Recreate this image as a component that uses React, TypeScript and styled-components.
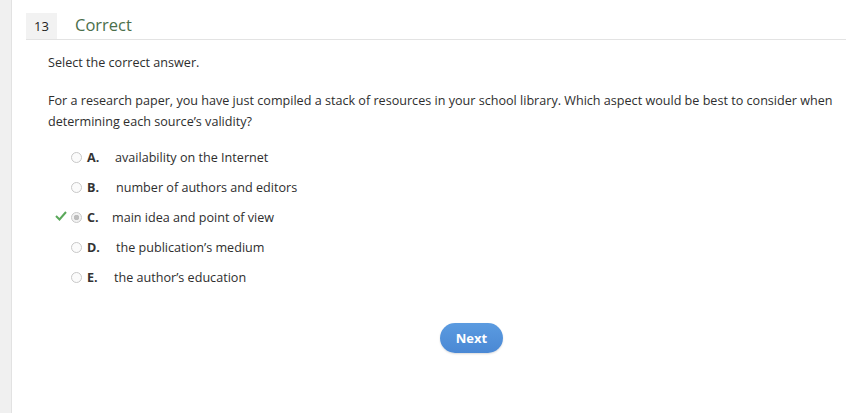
import React from "react";
import styled, { createGlobalStyle } from "styled-components";

const GlobalStyle = createGlobalStyle`
  html, body {
    margin: 0;
    padding: 0;
    background: #fff;
    font-family: "Open Sans", "Liberation Sans", sans-serif;
    color: #333;
  }
`;

const Page = styled.div`
  display: flex;
  height: 413px;
  overflow: hidden;
`;
const Rail = styled.div`
  width: 11px;
  flex-shrink: 0;
  background: #f0f0f0;
  border-right: 1px solid #e2e2e2;
`;
const Main = styled.div`
  flex: 1;
  padding: 13px 0 0 14px;
`;
const Header = styled.div`
  display: flex;
  align-items: stretch;
  height: 26px;
  border-bottom: 1px solid #e3e3e3;
`;
const Number = styled.div`
  width: 31px;
  background: #f2f2f2;
  display: flex;
  align-items: center;
  justify-content: center;
  font-size: 13px;
  color: #222;
`;
const Status = styled.div`
  margin-left: 18px;
  font-size: 16.5px;
  color: #4b6f4b;
  display: flex;
  align-items: center;
  padding-bottom: 4px;
`;
const Body = styled.div`
  padding: 12px 0 0 22px;
  font-size: 12.6px;
  line-height: 21px;
  color: #2e2e2e;
`;
const Prompt = styled.p`
  margin: 0 0 17px;
`;
const Question = styled.p`
  margin: 0 0 10px;
  padding-right: 8px;
`;
const Options = styled.div`
  display: flex;
  flex-direction: column;
`;
const Option = styled.div`
  height: 30px;
  display: flex;
  align-items: center;
  position: relative;
  padding-left: 23px;
`;
const Check = styled.svg`
  position: absolute;
  left: 7px;
  top: 9px;
`;
const Radio = styled.span<{ $selected?: boolean }>`
  width: 9px;
  height: 9px;
  border-radius: 50%;
  border: 1px solid #c8c8c8;
  background: ${(p) => (p.$selected ? "radial-gradient(circle, #bdbdbd 0 2.5px, #f2f2f2 3px)" : "#fbfbfb")};
  box-sizing: content-box;
  margin-right: 5px;
`;
const Letter = styled.span`
  font-weight: 700;
  width: 28px;
  color: #333;
`;
const Text = styled.span<{ $shift: number }>`
  margin-left: ${(p) => p.$shift}px;
`;
const Footer = styled.div`
  display: flex;
  justify-content: center;
  padding: 31px 0 0;
  margin-left: 49px;
`;
const NextButton = styled.button`
  width: 63px;
  height: 30px;
  border: none;
  border-radius: 15px;
  background: linear-gradient(#5b9be0, #4a88d4);
  color: #fff;
  font-family: inherit;
  font-weight: 700;
  font-size: 13px;
  box-shadow: 0 1px 2px rgba(0, 0, 0, 0.15);
`;

const options = [
  { letter: "A.", text: "availability on the Internet", shift: 0 },
  { letter: "B.", text: "number of authors and editors", shift: 1 },
  { letter: "C.", text: "main idea and point of view", shift: -3, selected: true },
  { letter: "D.", text: "the publication’s medium", shift: 1 },
  { letter: "E.", text: "the author’s education", shift: -1 },
];

export default function App() {
  return (
    <Page>
      <GlobalStyle />
      <Rail />
      <Main>
        <Header>
          <Number>13</Number>
          <Status>Correct</Status>
        </Header>
        <Body>
          <Prompt>Select the correct answer.</Prompt>
          <Question>
            For a research paper, you have just compiled a stack of resources in your school library. Which aspect would be best to consider when determining each source’s validity?
          </Question>
          <Options>
            {options.map((o) => (
              <Option key={o.letter}>
                {o.selected && (
                  <Check width="12" height="10" viewBox="0 0 12 10">
                    <path d="M1 5 L4.5 8.5 L11 1" fill="none" stroke="#5aa85a" strokeWidth="2" />
                  </Check>
                )}
                <Radio $selected={o.selected} />
                <Letter>{o.letter}</Letter>
                <Text $shift={o.shift}>{o.text}</Text>
              </Option>
            ))}
          </Options>
          <Footer>
            <NextButton>Next</NextButton>
          </Footer>
        </Body>
      </Main>
    </Page>
  );
}
